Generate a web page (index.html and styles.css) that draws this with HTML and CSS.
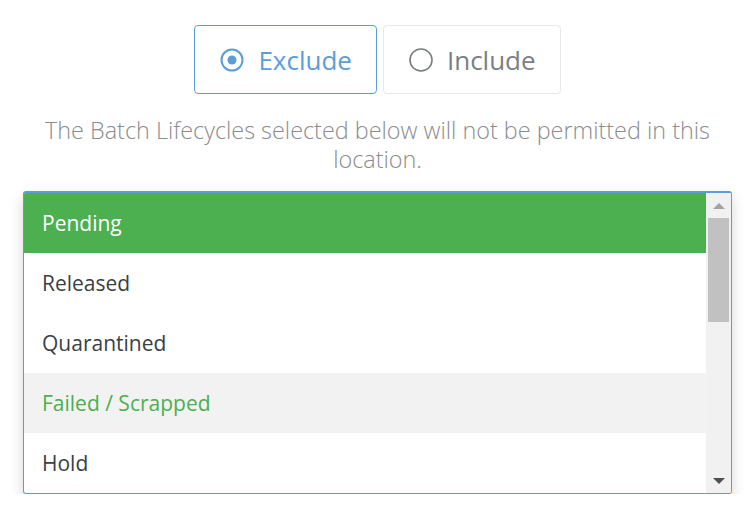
FILE: index.html
```html
<!DOCTYPE html>
<html>
<head>
<meta charset="utf-8">
<link rel="stylesheet" href="styles.css">
</head>
<body>
<div class="page">
  <div class="toggle">
    <div class="opt opt-active">
      <svg class="radio" width="24" height="24" viewBox="0 0 24 24"><circle cx="12" cy="12" r="10.5" fill="none" stroke="#5b9dd9" stroke-width="2"/><circle cx="12" cy="12" r="4.5" fill="#5b9dd9"/></svg>
      <span>Exclude</span>
    </div>
    <div class="opt">
      <svg class="radio" width="24" height="24" viewBox="0 0 24 24"><circle cx="12" cy="12" r="11" fill="none" stroke="#7a7f85" stroke-width="1.6"/></svg>
      <span>Include</span>
    </div>
  </div>
  <p class="note">The Batch Lifecycles selected below will not be permitted in this location.</p>
  <div class="listbox">
    <div class="items">
      <div class="item item-selected">Pending</div>
      <div class="item">Released</div>
      <div class="item">Quarantined</div>
      <div class="item item-hover">Failed / Scrapped</div>
      <div class="item">Hold</div>
    </div>
    <div class="scrollbar">
      <div class="arrow arrow-up"></div>
      <div class="track"><div class="thumb"></div></div>
      <div class="arrow arrow-down"></div>
    </div>
  </div>
</div>
</body>
</html>
```
FILE: styles.css
```css
html, body {
  margin: 0;
  padding: 0;
  background: #ffffff;
}
.page {
  font-family: "Open Sans", "Liberation Sans", sans-serif;
  padding: 25px 21px 0 23px;
}
.toggle {
  display: flex;
  justify-content: center;
  gap: 6px;
}
.opt {
  display: flex;
  align-items: center;
  gap: 14px;
  height: 67px;
  padding: 0 24px 0 25px;
  border: 1px solid #e8e8e8;
  border-radius: 4px;
  font-size: 26px;
  color: #7a7f85;
}
.opt-active {
  border-color: #5b9dd9;
  color: #5b9dd9;
}
.radio {
  display: block;
  flex: none;
}
.note {
  margin: 22px 0 0;
  text-align: center;
  font-size: 23.4px;
  font-weight: 300;
  line-height: 29px;
  color: #8a8c90;
}
.listbox {
  margin-top: 17px;
  display: flex;
  border: 1px solid #5b9dd9;
  border-top-width: 2px;
  border-radius: 3px;
  box-shadow: 0 6px 14px rgba(0, 0, 0, 0.16);
  height: 300px;
  overflow: hidden;
}
.items {
  flex: 1;
}
.item {
  height: 60px;
  line-height: 60px;
  padding-left: 18px;
  font-size: 21px;
  color: #3a3f44;
}
.item-selected {
  background: #4caf50;
  color: #ffffff;
}
.item-hover {
  background: #f2f2f2;
  color: #4caf50;
}
.scrollbar {
  width: 25px;
  background: #f1f1f1;
  display: flex;
  flex-direction: column;
}
.arrow {
  height: 25px;
  display: flex;
  align-items: center;
  justify-content: center;
}
.arrow-up::before {
  content: "";
  border-left: 6px solid transparent;
  border-right: 6px solid transparent;
  border-bottom: 6px solid #a3a3a3;
}
.arrow-down::before {
  content: "";
  border-left: 6px solid transparent;
  border-right: 6px solid transparent;
  border-top: 6px solid #505050;
}
.track {
  flex: 1;
  padding: 0 2px;
}
.thumb {
  height: 104px;
  background: #c1c1c1;
}
```
